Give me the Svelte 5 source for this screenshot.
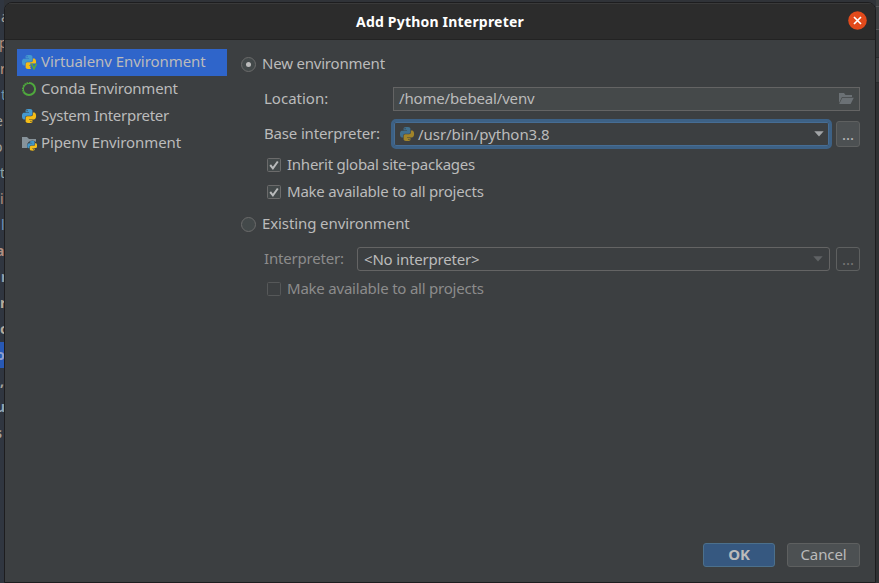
<script>
  const environments = [
    { name: 'Virtualenv Environment', icon: 'virtualenv', tracking: -0.05 },
    { name: 'Conda Environment', icon: 'conda', tracking: -0.18 },
    { name: 'System Interpreter', icon: 'python', tracking: -0.28 },
    { name: 'Pipenv Environment', icon: 'pipenv', tracking: -0.11 }
  ];
  const editorLines = [
    { text: 'a', color: '#a9a39a', shift: 1 },
    { text: 'p', color: '#b5917c', shift: -1 },
    { text: 'r', color: '#c09a80', shift: 0 },
    { text: 't', color: '#6f95ad', shift: 1 },
    { text: 'e', color: '#a5a29c', shift: -5 },
    { text: 'o', color: '#a5a29c', shift: -6 },
    { text: 't', color: '#8fa5a8', shift: 0 },
    { text: 'i', color: '#b5917c', shift: 0 },
    { text: 'l', color: '#6f95bd', shift: 1 },
    { text: 'a', color: '#b08f80', shift: -4 },
    { text: 'r', color: '#8f9fae', shift: 1 },
    { text: 'r', color: '#b5aa9c', shift: 0 },
    { text: 'c', color: '#b5aa9c', shift: 0 },
    { text: 'o', color: '#8f9fce', shift: -4 },
    { text: ',', color: '#a5a29c', shift: 0 },
    { text: 'u', color: '#8fa5b8', shift: -4 },
    { text: 's', color: '#a5a29c', shift: -5 }
  ];
  let selected = $state('virtualenv');
  let mode = $state('new');
  let inherit = $state(true);
  let shared = $state(true);
</script>

{#snippet snake()}
  <path d="M14.25.18l.9.2.73.26.59.3.45.32.34.34.25.34.16.33.1.3.04.26.02.2-.01.13V8.5l-.05.63-.13.55-.21.46-.26.38-.3.31-.33.25-.35.19-.35.14-.33.1-.3.07-.26.04-.21.02H8.77l-.69.05-.59.14-.5.22-.41.27-.33.32-.27.35-.2.36-.15.37-.1.35-.07.32-.04.27-.02.21v3.06H3.17l-.21-.03-.28-.07-.32-.12-.35-.18-.36-.26-.36-.36-.35-.46-.32-.59-.28-.73-.21-.88-.14-1.05-.05-1.23.06-1.22.16-1.04.24-.87.32-.71.36-.57.4-.44.42-.33.42-.24.4-.16.36-.1.32-.05.24-.01h.16l.06.01h8.16v-.83H6.18l-.01-2.75-.02-.37.05-.34.11-.31.17-.28.25-.26.31-.23.38-.2.44-.18.51-.15.58-.12.64-.1.71-.06.77-.04.84-.02 1.27.05zm-6.3 1.98l-.23.33-.08.41.08.41.23.34.33.22.41.09.41-.09.33-.22.23-.34.08-.41-.08-.41-.23-.33-.33-.22-.41-.09-.41.09z" />
{/snippet}

{#snippet icon(kind)}
  <svg class="icon" width="16" height="16" viewBox="0 0 16 16">
    {#if kind === 'conda'}
      <circle cx="8" cy="8" r="6.1" fill="none" stroke="#4fa83d" stroke-width="2" />
      <circle cx="8" cy="8" r="6.7" fill="none" stroke="#3c3f41" stroke-width="1.1" stroke-dasharray="1 1.6 1 1.6 1 1.6 1 1.6 1 1.6 1 30" transform="rotate(150 8 8)" />
    {:else if kind === 'pipenv'}
      <path d="M1 2h5l2 2h7v9H1z" fill="#87939a" />
      <circle cx="11.3" cy="10.8" r="5.3" fill="#3c3f41" />
      <g transform="translate(6.3 5.8) scale(.41)">
        <g fill="#4296c8">{@render snake()}</g>
        <g fill="#f4bd17" transform="rotate(180 12 12)">{@render snake()}</g>
      </g>
    {:else}
      <g transform="translate(1 1) scale(.585)">
        <g fill="#4499cf">{@render snake()}</g>
        <g fill="#f4bd17" transform="rotate(180 12 12)">{@render snake()}</g>
      </g>
      {#if kind === 'virtualenv'}
        <path d="M9.2 9.5h6.8v6.5H10z" fill="#2f65ca" />
        <path d="M10.6 9.6l2.4 5.2L15.4 9.6" fill="none" stroke="#59a83f" stroke-width="1.6" />
      {/if}
    {/if}
  </svg>
{/snippet}

{#snippet check(on)}
  <svg width="14" height="14" viewBox="0 0 14 14">
    <rect x=".5" y=".5" width="13" height="13" rx="1" fill={on ? '#43494a' : 'none'} stroke={on ? '#6b6b6b' : '#565859'} />
    {#if on}<path d="M3.2 7l2.7 3.3L10.8 3.5" fill="none" stroke="#b8babb" stroke-width="2" />{/if}
  </svg>
{/snippet}

{#snippet radio(on)}
  <svg width="15" height="15" viewBox="0 0 15 15">
    <circle cx="7.5" cy="7.5" r="7" fill="#43494a" stroke="#6b6b6b" />
    {#if on}<circle cx="7.5" cy="7.5" r="2.5" fill="#bbb" />{/if}
  </svg>
{/snippet}

<div class="screen">
  <div class="editor">
    {#each editorLines as line, i}
      <div class="line" class:current={i === 13} class:bold={i > 8} style:color={line.color} style:text-indent="{line.shift}px">{line.text}</div>
    {/each}
  </div>

  <div class="dialog">
    <header>
      <h1>Add Python Interpreter</h1>
      <button class="close" aria-label="Close">
        <svg width="19" height="19" viewBox="0 0 19 19"><circle cx="9.5" cy="9.5" r="9.3" fill="#e24a1b" /><path d="M6 6l7 7M13 6l-7 7" stroke="#fff" stroke-width="1.7" /></svg>
      </button>
    </header>

    <div class="body">
      <nav>
        {#each environments as env}
          <button class="env" class:active={selected === env.icon} onclick={() => (selected = env.icon)}>
            {@render icon(env.icon)}<span style:letter-spacing="{env.tracking}px">{env.name}</span>
          </button>
        {/each}
      </nav>

      <main>
        <button class="row radio first" onclick={() => (mode = 'new')}>{@render radio(mode === 'new')}<span class="newenv">New environment</span></button>
        <div class="row field location">
          <span class="label loc">Location:</span>
          <div class="input"><span class="path">/home/bebeal/venv</span>
            <svg width="16" height="14" viewBox="0 0 16 14"><path d="M1 1h5l1.5 2H14v2H4L1 11z" fill="#6b7175" /><path d="M4.3 5.8H15.8L12.6 12H1.2z" fill="#6b7175" /></svg>
          </div>
        </div>
        <div class="row field base">
          <span class="label baselabel">Base interpreter:</span>
          <div class="combo focused"><span class="dim">{@render icon('python')}</span><span class="usr">/usr/bin/python3.8</span>
            <svg class="arrow" width="10" height="6" viewBox="0 0 10 6"><path d="M.3 .3h9.4L5 5.5z" fill="#a2a5a7" /></svg>
          </div>
          <button class="more"><span>...</span></button>
        </div>
        <button class="row box inherit" onclick={() => (inherit = !inherit)}>{@render check(inherit)}<span class="inh">Inherit global site-packages</span></button>
        <button class="row box share" onclick={() => (shared = !shared)}>{@render check(shared)}<span class="mk">Make available to all projects</span></button>
        <button class="row radio second" onclick={() => (mode = 'existing')}>{@render radio(mode === 'existing')}<span class="exist">Existing environment</span></button>
        <div class="row field existing">
          <span class="label muted interp">Interpreter:</span>
          <div class="combo"><span class="none">&lt;No interpreter&gt;</span>
            <svg class="arrow" width="10" height="6" viewBox="0 0 10 6"><path d="M.3 .3h9.4L5 5.5z" fill="#5f6264" /></svg>
          </div>
          <button class="more off"><span>...</span></button>
        </div>
        <div class="row box muted last">{@render check(false)}<span class="mk">Make available to all projects</span></div>
      </main>
    </div>

    <footer>
      <button class="action ok">OK</button>
      <button class="action">Cancel</button>
    </footer>
  </div>

  <div class="gutter"><i class="a"></i><i class="b"></i><i class="c"></i><i class="d"></i></div>
</div>

<style>
  :global(body) { background: #303338; overflow: hidden; }
  .screen { display: flex; width: 879px; height: 583px; box-sizing: border-box; background: #303338; overflow: hidden; font: 15px/20px "Noto Sans", sans-serif; color: #bbb; }
  button { font: inherit; color: inherit; background: none; border: 0; padding: 0; margin: 0; letter-spacing: inherit; text-align: left; }
  span { white-space: nowrap; }
  svg { display: block; flex: none; }
  .editor { width: 4px; flex: none; padding-top: 4px; background: #303640; overflow: hidden; }
  .line { width: 4px; height: 26px; line-height: 25px; white-space: nowrap; font-size: 14px; }
  .bold { font-weight: 700; }
  .current { background: #2859b5; }
  .dialog { width: 870px; height: 579px; flex: none; margin-top: 2px; border: 1px solid #1d1d1f; border-radius: 8px 8px 0 0; background: #3c3f41; display: flex; flex-direction: column; overflow: hidden; }
  header { height: 35px; flex: none; display: flex; align-items: center; position: relative; background: #2c2c2c; border-top: 1px solid #3a3a3a; border-bottom: 1px solid #232323; }
  h1 { flex: 1; margin: 0; text-align: center; font-size: 14px; font-weight: 700; color: #fff; letter-spacing: .2px; }
  .close { position: absolute; right: 8px; top: 7px; }
  .body { flex: 1; display: flex; padding: 9px 15px 0 12px; gap: 14px; }
  nav { width: 210px; flex: none; }
  .env { display: flex; align-items: center; width: 210px; height: 27px; gap: 4px; padding: 0 0 1px 4px; box-sizing: border-box; }
  .active { background: #2f65ca; }
  .env span { padding-bottom: 2px; }
  main { flex: 1; display: flex; flex-direction: column; }
  .row { display: flex; align-items: center; flex: none; }
  .radio { gap: 6px; }
  .radio span { padding-bottom: 2px; }
  .newenv { letter-spacing: -.2px; }
  .exist { letter-spacing: -.1px; }
  .first { height: 30px; }
  .second { height: 36px; }
  .location { height: 40px; }
  .base { height: 30px; }
  .existing { height: 34px; }
  .box { gap: 6px; padding-left: 26px; }
  .box span { padding-bottom: 2px; }
  .inh { letter-spacing: -.25px; }
  .mk { letter-spacing: -.22px; }
  .inherit { height: 26px; margin-top: 3px; }
  .share { height: 28px; }
  .last { height: 26px; }
  .muted { color: #8c8c8c; }
  .field { padding-left: 23px; }
  .label { width: 129px; flex: none; padding-bottom: 2px; }
  .baselabel { letter-spacing: -.16px; }
  .interp { width: 93px; letter-spacing: -.18px; }
  .input { flex: 1; height: 24px; box-sizing: border-box; display: flex; align-items: center; justify-content: space-between; padding: 0 5px; border: 1px solid #646464; background: #45494a; }
  .path { letter-spacing: -.16px; padding-bottom: 2px; }
  .usr { letter-spacing: -.05px; }
  .none { letter-spacing: -.18px; }
  .combo { flex: 1; height: 24px; box-sizing: border-box; display: flex; align-items: center; padding: 0 6px; border: 1px solid #646464; border-radius: 3px; }
  .focused { height: 30px; margin-left: -2px; margin-right: -2px; border: 3px solid #3d6185; border-radius: 5px; box-shadow: inset 0 0 0 1px #466d94; padding: 0 5px 0 5px; }
  .dim { opacity: .55; margin-right: 3px; }
  .arrow { margin-left: auto; }
  .more { width: 24px; height: 26px; flex: none; margin-left: 6px; box-sizing: border-box; border: 1px solid #5e6060; border-radius: 3px; background: #4c5052; text-align: center; }
  .more.off { height: 24px; background: none; color: #777; }
  footer { display: flex; justify-content: flex-end; gap: 12px; padding: 0 15px 15px 0; }
  .action { width: 73px; height: 24px; box-sizing: border-box; border: 1px solid #5e6060; border-radius: 3px; background: #4c5052; text-align: center; line-height: 20px; padding-bottom: 2px; letter-spacing: -.1px; }
  .ok { width: 72px; background: #365880; border-color: #4c708c; font-weight: 700; }
  .gutter { flex: 1; background: #2f3133; display: flex; flex-direction: column; }
  .gutter i { box-sizing: border-box; border-bottom: 1px solid #55585a; background: #3c3f41; }
  .gutter .a { height: 7px; }
  .gutter .b { height: 23px; }
  .gutter .c { height: 28px; border-color: #292b2d; background: #333638; }
  .gutter .d { height: 25px; border-color: #292b2d; }
</style>
